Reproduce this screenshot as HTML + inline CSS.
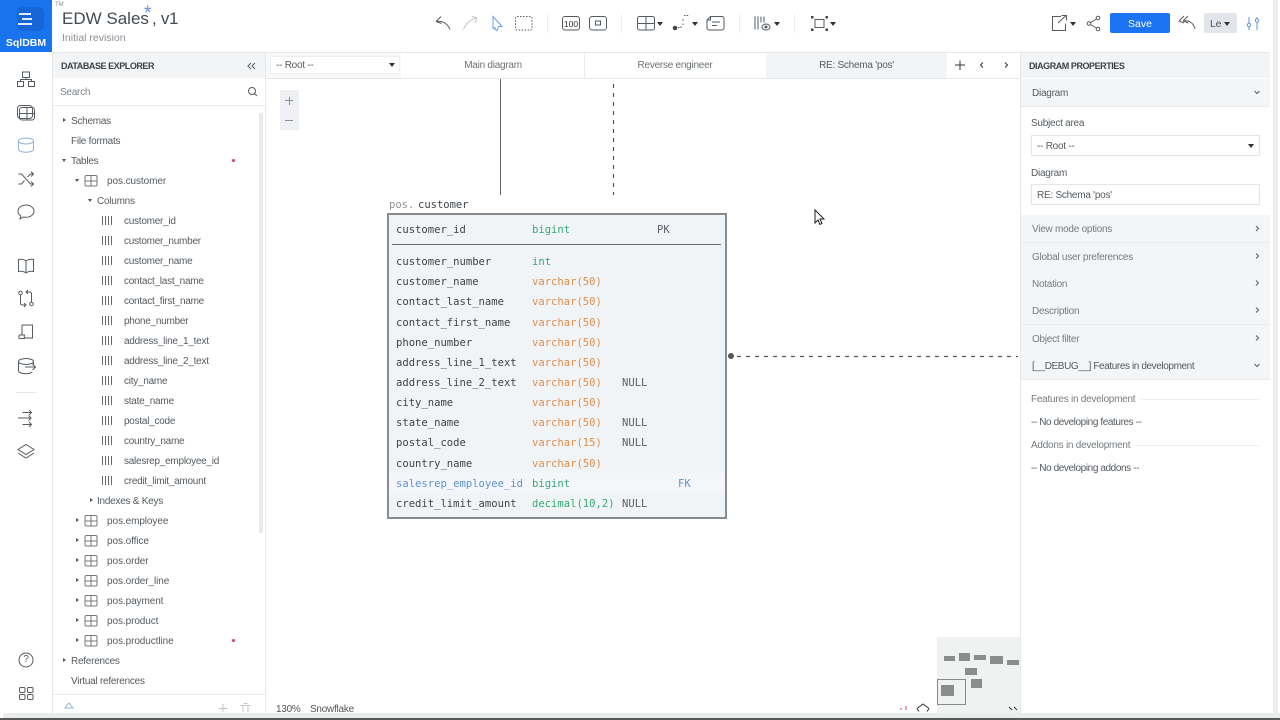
<!DOCTYPE html>
<html><head><meta charset="utf-8"><title>SqlDBM</title>
<style>
html,body{margin:0;padding:0;width:1280px;height:720px;overflow:hidden;background:#fff}
#r{position:relative;width:1280px;height:720px;overflow:hidden;font-family:"Liberation Sans",sans-serif;color:#555b60;font-size:10px;filter:blur(.3px)}
.t{position:absolute;line-height:16px;white-space:nowrap;letter-spacing:-.25px;transform:translateY(2px)}
.p{letter-spacing:-.08px}
.b{position:absolute}
.m{position:absolute;line-height:16px;white-space:nowrap;font-family:"DejaVu Sans Mono",monospace;font-size:10.55px;color:#3f4448;transform:translateY(1px)}
.g{color:#3aa873}.o{color:#dc8f4e}.n{color:#5b6166}
svg{position:absolute;overflow:visible;fill:none;stroke:#555b60;stroke-width:1}
.a{position:absolute;width:0;height:0;border-top:2.5px solid transparent;border-bottom:2.5px solid transparent;border-left:3px solid #555}
.d{position:absolute;width:0;height:0;border-left:2.5px solid transparent;border-right:2.5px solid transparent;border-top:3px solid #555}
.c{position:absolute;width:0;height:0;border-left:3px solid transparent;border-right:3px solid transparent;border-top:4px solid #333}
.sep{position:absolute;width:1px;height:19px;top:14px;background:#eceeef}
.row{position:absolute;left:1021px;width:249px;height:27px;background:#f3f5f7;border-bottom:1px solid #e9ebed}
.dot{position:absolute;width:3px;height:3px;border-radius:2px;background:#e2386a;left:232px}
.h{font-size:9px;color:#3d4246;font-weight:bold;letter-spacing:-.45px}
</style></head><body><div id="r">

<!-- left rail -->
<div class="b" style="left:0;top:0;width:52px;height:52px;background:#1873ee"></div>
<div class="b" style="left:17px;top:7px;width:27px;height:24px;background:#1666d8;border-radius:6px"></div>
<div class="b" style="left:19px;top:13px;width:12px;height:2px;background:#dfeafd"></div>
<div class="b" style="left:22px;top:18px;width:10px;height:2px;background:#dfeafd"></div>
<div class="b" style="left:18px;top:23px;width:14px;height:2px;background:#dfeafd"></div>
<div class="t" style="left:0;top:33px;width:52px;text-align:center;color:#fff;font-size:10.5px;font-weight:bold;letter-spacing:0">SqlDBM</div>
<div class="b" style="left:52px;top:52px;width:1px;height:668px;background:#e6e8ea"></div>
<div class="t" style="left:55px;top:-5px;font-size:6px;color:#888;letter-spacing:0">TM</div>

<svg style="left:0;top:0" width="53" height="720">
 <!-- hierarchy -->
 <rect x="22.5" y="72" width="7" height="5.5"/><rect x="17.5" y="81.5" width="6" height="5"/><rect x="28.5" y="81.5" width="6" height="5"/><path d="M26 77.5v2M20.5 81.5v-2h11v2"/>
 <!-- table -->
 <rect x="17.5" y="105.500" width="15" height="13" rx="3"/>
 <rect x="19.5" y="107.500" width="15" height="12.500" rx="2.500"/><path d="M19.500 113.500h15M27 107.500v12.500"/>
 <!-- database -->
 <g stroke="#8fb1dd"><ellipse cx="26" cy="141" rx="7.5" ry="3"/><path d="M18.5 141v8c0 2 3.4 3.2 7.500 3.200s7.500-1.200 7.500-3.200v-8"/></g>
 <!-- shuffle -->
 <path d="M18.500 174l3 0 9 10h3M18.500 184h3l3-3.500M27.500 177l3-3h3M31 171.500l2.500 2.500-2.500 2.500M31 181.500l2.500 2.500-2.500 2.500"/>
 <!-- comment -->
 <path d="M26 205c-4.500 0-8 2.800-8 6.300 0 2 1.100 3.600 2.800 4.700l-.8 2.800 3.400-1.800c.8.200 1.700.3 2.600.3 4.500 0 8-2.800 8-6 0-3.500-3.500-6.300-8-6.300z"/>
 <!-- book -->
 <path d="M26 261c-2-1.500-5-2-7.500-1.500v12c2.500-.5 5.500 0 7.500 1.500 2-1.500 5-2 7.500-1.500v-12c-2.500-.5-5.500 0-7.500 1.500zM26 261v12"/>
 <!-- pull request -->
 <circle cx="20.500" cy="293" r="1.800"/><circle cx="31.500" cy="304" r="1.800"/><path d="M20.500 295v8c0 1.500 1 2 2 2h3M24 303l2 2-2 2M31.500 302v-8c0-1.500-1-2-2-2h-3M28 290l-2 2 2 2"/>
 <!-- scroll -->
 <path d="M22 325h10.500v13h-8M22 325v10M22 335h-2.500c-.8 0-.8 3.500 0 3.500h5.500c-1-.5-1-3.500 0-3.500z"/>
 <!-- db arrow -->
 <ellipse cx="26" cy="361.500" rx="7.500" ry="3"/><path d="M18.500 361.500v9c0 2 3.400 3.200 7.500 3.200 2.500 0 5-.5 6.300-1.700M33.500 361.500v3M25 367h10.500M32.500 364l3 3-3 3"/>
 <!-- arrows -->
 <path d="M22.500 412.500h9M29 410l2.500 2.500-2.500 2.500M18 418h13M28.500 415.500l2.500 2.500-2.500 2.500M22.500 424.500h9M29 422l2.500 2.500-2.500 2.500"/>
 <!-- layers -->
 <path d="M26 444.500l8 5-8 5-8-5zM18 453l8 5 8-5"/>
 <!-- help -->
 <circle cx="26" cy="660" r="7"/>
 <!-- apps -->
 <rect x="19.500" y="687.500" width="5.500" height="5" rx="1.200"/><rect x="27.500" y="687.500" width="5.500" height="5" rx="1.200"/><rect x="19.500" y="694.500" width="5.500" height="5" rx="1.200"/><rect x="27.500" y="694.500" width="5.500" height="5" rx="1.200"/>
</svg>
<div class="b" style="left:16px;top:392px;width:20px;height:1px;background:#e6e8ea"></div>
<div class="t" style="left:22px;top:650px;font-size:10px;color:#555;width:8px;text-align:center;letter-spacing:0">?</div>

<!-- title -->
<div class="t" style="left:62px;top:6px;font-size:17px;line-height:22px;color:#444a4f;letter-spacing:0">EDW Sales</div>
<div class="t" style="left:144px;top:2px;font-size:19px;line-height:20px;color:#6c8fdc;letter-spacing:0">*</div>
<div class="t" style="left:152px;top:6px;font-size:17px;line-height:22px;color:#444a4f;letter-spacing:-.3px">, v1</div>
<div class="t" style="left:62px;top:28px;font-size:10.5px;color:#8b9095;letter-spacing:0">Initial revision</div>

<!-- toolbar icons -->
<svg style="left:0;top:0" width="1280" height="52">
 <path d="M436 21.500l5-5M436 21.500l5.500 2M436.500 21.500c5-1 11 1.500 13.500 8"/>
 <g stroke="#c2c5c8"><path d="M477 18l-5-1.500M477 18l-2 5M476.500 18c-5 1-10 4-13 11.500"/></g>
 <path d="M493 16.500l9 10h-3.500l-1.500 4-2 -1 0-2-2 1z" stroke="#6f9ce0"/>
 <rect x="515.500" y="16.500" width="16.500" height="13.500" rx="1.500" stroke-dasharray="1.500 1.500"/>
 <rect x="562.500" y="16.500" width="17" height="13.500" rx="2.500"/>
 <rect x="589.500" y="16.500" width="17" height="13.500" rx="2.500"/><rect x="595.500" y="21" width="5" height="4" />
 <rect x="637.500" y="16.500" width="17" height="13.500" rx="2"/><path d="M637.500 23.500h17M646 16.500v13.500"/>
 <circle cx="675" cy="28" r="1.800" fill="#444" stroke="#444"/><path d="M678 27.500h3v-2M683 25v-2M683 21v-3M684 15.500h5" stroke-dasharray="1.500 1.200"/>
 <path d="M710.500 16.500h11.500a2 2 0 012 2v9.500a2 2 0 01-2 2h-13a2 2 0 01-2-2v-8zM706.500 20h4v-3.500M712 22h8M712 25.500h5"/>
 <path d="M755 16.500v13M758 16.500v13M761 16.500v6M764 16.500v6"/><ellipse cx="766" cy="27" rx="4" ry="3"/><circle cx="766" cy="27" r="1" fill="#555"/>
 <rect x="815" y="19.500" width="9" height="8"/>
 <g fill="#444" stroke="none"><rect x="811" y="16" width="2.500" height="2.500"/><rect x="825.500" y="16" width="2.500" height="2.500"/><rect x="811" y="28.500" width="2.500" height="2.500"/><rect x="825.500" y="28.500" width="2.500" height="2.500"/></g>
 <!-- right -->
 <path d="M1061 16.500h-8.500v14h13v-7M1058 23l8-7.500M1061.500 15.500h5v5"/>
 <circle cx="1098" cy="18" r="1.800"/><circle cx="1098" cy="29" r="1.800"/><circle cx="1089" cy="23.500" r="1.800"/><path d="M1090.500 22.500l6-3.500M1090.500 24.500l6 3.500"/>
 <path d="M1183 21l5-5M1183 21l5.500 2M1179 21l5-5M1179 21l5 2M1184 21c5-1 9.500 2 11 8"/>
 <g stroke="#5d93dc"><path d="M1249 17v13M1257 17v13"/><circle cx="1249" cy="25" r="1.700" fill="#fff"/><circle cx="1257" cy="20.500" r="1.700" fill="#fff"/></g>
</svg>
<div class="t" style="left:562px;top:13.500px;width:18px;text-align:center;font-size:8.5px;color:#333;letter-spacing:0">100</div>
<div class="sep" style="left:547px"></div><div class="sep" style="left:621px"></div><div class="sep" style="left:739px"></div><div class="sep" style="left:794px"></div>
<div class="c" style="left:657px;top:21.500px"></div><div class="c" style="left:692px;top:21.500px"></div><div class="c" style="left:774px;top:21.500px"></div><div class="c" style="left:830px;top:21.500px"></div><div class="c" style="left:1070px;top:21.500px"></div>
<div class="b" style="left:1110px;top:13px;width:60px;height:20px;background:#1c74f2;border-radius:2px"></div>
<div class="t" style="left:1110px;top:14px;width:60px;text-align:center;color:#fff;font-size:10.500px;letter-spacing:0">Save</div>
<div class="b" style="left:1204px;top:13px;width:33px;height:20px;background:#e2e5e9;border-radius:2px"></div>
<div class="t" style="left:1210px;top:14px;color:#555;font-size:10.5px">Le</div>
<div class="c" style="left:1224px;top:21.500px"></div>

<!-- horizontal lines under header -->
<div class="b" style="left:53px;top:52px;width:1217px;height:1px;background:#e6e8ea"></div>
<div class="b" style="left:265px;top:78px;width:755px;height:1px;background:#e6e8ea"></div>

<!-- explorer -->
<div class="b" style="left:53px;top:53px;width:212px;height:25px;background:#f2f4f6"></div>
<div class="t h" style="left:61px;top:56px">DATABASE EXPLORER</div>
<svg style="left:0;top:0" width="280" height="110"><path d="M251 63l-3 3 3 3M255 63l-3 3 3 3"/><circle cx="252" cy="91" r="3.500"/><path d="M254.500 93.500l2.500 2.500"/></svg>
<div class="t" style="left:60px;top:83px;color:#7d8286">Search</div>
<div class="b" style="left:53px;top:105px;width:212px;height:1px;background:#e9ebed"></div>
<div class="b" style="left:265px;top:52px;width:1px;height:668px;background:#e6e8ea"></div>
<div class="b" style="left:259px;top:113px;width:4px;height:420px;background:#e9eaeb"></div>

<div class="a" style="left:63px;top:118px"></div><div class="t" style="left:71px;top:112px">Schemas</div>
<div class="t" style="left:71px;top:132px">File formats</div>
<div class="d" style="left:62px;top:159px"></div><div class="t" style="left:71px;top:152px">Tables</div><div class="dot" style="top:159px"></div>
<div class="d" style="left:75px;top:179px"></div><div class="t p" style="left:107px;top:172px">pos.customer</div>
<div class="d" style="left:88px;top:199px"></div><div class="t" style="left:97px;top:192px">Columns</div>
<div class="t" style="left:124px;top:212px">customer_id</div>
<div class="t" style="left:124px;top:232px">customer_number</div>
<div class="t" style="left:124px;top:252px">customer_name</div>
<div class="t" style="left:124px;top:272px">contact_last_name</div>
<div class="t" style="left:124px;top:292px">contact_first_name</div>
<div class="t" style="left:124px;top:312px">phone_number</div>
<div class="t" style="left:124px;top:332px">address_line_1_text</div>
<div class="t" style="left:124px;top:352px">address_line_2_text</div>
<div class="t" style="left:124px;top:372px">city_name</div>
<div class="t" style="left:124px;top:392px">state_name</div>
<div class="t" style="left:124px;top:412px">postal_code</div>
<div class="t" style="left:124px;top:432px">country_name</div>
<div class="t" style="left:124px;top:452px">salesrep_employee_id</div>
<div class="t" style="left:124px;top:472px">credit_limit_amount</div>
<div class="a" style="left:90px;top:498px"></div><div class="t" style="left:97px;top:492px">Indexes &amp; Keys</div>
<div class="a" style="left:76px;top:518px"></div><div class="t p" style="left:107px;top:512px">pos.employee</div>
<div class="a" style="left:76px;top:538px"></div><div class="t p" style="left:107px;top:532px">pos.office</div>
<div class="a" style="left:76px;top:558px"></div><div class="t p" style="left:107px;top:552px">pos.order</div>
<div class="a" style="left:76px;top:578px"></div><div class="t p" style="left:107px;top:572px">pos.order_line</div>
<div class="a" style="left:76px;top:598px"></div><div class="t p" style="left:107px;top:592px">pos.payment</div>
<div class="a" style="left:76px;top:618px"></div><div class="t p" style="left:107px;top:612px">pos.product</div>
<div class="a" style="left:76px;top:638px"></div><div class="t p" style="left:107px;top:632px">pos.productline</div><div class="dot" style="top:639px"></div>
<div class="a" style="left:63px;top:658px"></div><div class="t" style="left:71px;top:652px">References</div>
<div class="t" style="left:71px;top:672px">Virtual references</div>
<div class="b" style="left:53px;top:694px;width:212px;height:1px;background:#e9ebed"></div>

<svg style="left:0;top:0" width="270" height="720" stroke="#777">
 <g stroke="#777">
 <rect x="85" y="175.500" width="12" height="10.500" rx="1.500"/><path d="M85 181h12M91 175.500v10.500"/>
 <rect x="85" y="515.500" width="12" height="10.500" rx="1.500"/><path d="M85 521h12M91 515.500v10.500"/>
 <rect x="85" y="535.500" width="12" height="10.500" rx="1.500"/><path d="M85 541h12M91 535.500v10.500"/>
 <rect x="85" y="555.500" width="12" height="10.500" rx="1.500"/><path d="M85 561h12M91 555.500v10.500"/>
 <rect x="85" y="575.500" width="12" height="10.500" rx="1.500"/><path d="M85 581h12M91 575.500v10.500"/>
 <rect x="85" y="595.500" width="12" height="10.500" rx="1.500"/><path d="M85 601h12M91 595.500v10.500"/>
 <rect x="85" y="615.500" width="12" height="10.500" rx="1.500"/><path d="M85 621h12M91 615.500v10.500"/>
 <rect x="85" y="635.500" width="12" height="10.500" rx="1.500"/><path d="M85 641h12M91 635.500v10.500"/>
 </g>
 <g stroke="#666">
 <path d="M102.500 216v9M105.500 216v9M108.500 216v9M111.500 216v9"/>
 <path d="M102.500 236v9M105.500 236v9M108.500 236v9M111.500 236v9"/>
 <path d="M102.500 256v9M105.500 256v9M108.500 256v9M111.500 256v9"/>
 <path d="M102.500 276v9M105.500 276v9M108.500 276v9M111.500 276v9"/>
 <path d="M102.500 296v9M105.500 296v9M108.500 296v9M111.500 296v9"/>
 <path d="M102.500 316v9M105.500 316v9M108.500 316v9M111.500 316v9"/>
 <path d="M102.500 336v9M105.500 336v9M108.500 336v9M111.500 336v9"/>
 <path d="M102.500 356v9M105.500 356v9M108.500 356v9M111.500 356v9"/>
 <path d="M102.500 376v9M105.500 376v9M108.500 376v9M111.500 376v9"/>
 <path d="M102.500 396v9M105.500 396v9M108.500 396v9M111.500 396v9"/>
 <path d="M102.500 416v9M105.500 416v9M108.500 416v9M111.500 416v9"/>
 <path d="M102.500 436v9M105.500 436v9M108.500 436v9M111.500 436v9"/>
 <path d="M102.500 456v9M105.500 456v9M108.500 456v9M111.500 456v9"/>
 <path d="M102.500 476v9M105.500 476v9M108.500 476v9M111.500 476v9"/>
 </g>
 <g stroke="#8fb1dd"><path d="M65 708l4-5 4 5zM69 703v1"/></g>
 <g stroke="#c3c6c9"><path d="M223 704v9M218.500 708.500h9M240.500 705.500h10M243 705.500v8M248 705.500v8M243.500 703.500h4"/></g>
</svg>

<!-- tab bar -->
<div class="b" style="left:266px;top:53px;width:135px;height:25px;background:#f7f8f9"></div>
<div class="b" style="left:270px;top:56px;width:130px;height:18px;background:#fff;border:1px solid #edeff0;box-sizing:border-box"></div>
<div class="t" style="left:276px;top:56px">-- Root --</div>
<div class="c" style="left:389px;top:62.500px"></div>
<div class="t" style="left:401px;top:56px;width:184px;text-align:center;color:#6d7276">Main diagram</div>
<div class="b" style="left:584px;top:53px;width:1px;height:25px;background:#e9ebed"></div>
<div class="t" style="left:585px;top:56px;width:180px;text-align:center;color:#6d7276">Reverse engineer</div>
<div class="b" style="left:766px;top:53px;width:181px;height:25px;background:#f2f4f6"></div>
<div class="t" style="left:766px;top:56px;width:181px;text-align:center;color:#555b60">RE: Schema 'pos'</div>
<svg style="left:0;top:0" width="1280" height="110">
 <path d="M955 65h10M960 60.500v9.500" stroke="#333"/><path d="M983 62.500l-2.500 2.500 2.500 2.500M1005 62.500l2.500 2.500-2.500 2.500" stroke="#333"/>
 <path d="M1255 63l3 3-3 3M1259 63l3 3-3 3"/>
</svg>
<!-- zoom -->
<div class="b" style="left:280px;top:90px;width:19px;height:40px;background:#eef0f3"></div>
<div class="b" style="left:285px;top:100px;width:8px;height:1px;background:#8a8f93"></div>
<div class="b" style="left:288.500px;top:96.500px;width:1px;height:8px;background:#8a8f93"></div>
<div class="b" style="left:285px;top:120px;width:8px;height:1px;background:#8a8f93"></div>

<!-- canvas -->
<div class="b" style="left:499.500px;top:79px;width:1.500px;height:116px;background:#666"></div>
<svg style="left:0;top:0" width="1280" height="400">
 <path d="M613.500 84v111" stroke="#555" stroke-width="1.200" stroke-dasharray="4 5"/>
 <path d="M737 356.500h281" stroke="#555" stroke-width="1.200" stroke-dasharray="4 5"/>
</svg>
<div class="m" style="left:389px;top:196px;color:#8e9398;font-size:10.500px">pos.</div>
<div class="m" style="left:418px;top:196px;font-size:10.500px">customer</div>
<div class="b" style="left:387px;top:213px;width:340px;height:306px;box-sizing:border-box;background:#f1f4f7;border:2px solid #898c8f"></div>
<div class="b" style="left:392px;top:244px;width:329px;height:1px;background:#64686b"></div>
<div class="b" style="left:389px;top:473px;width:336px;height:20px;background:#f4f6f9"></div>

<div class="m" style="left:396px;top:221px">customer_id</div><div class="m g" style="left:532px;top:221px">bigint</div><div class="m n" style="left:657px;top:221px">PK</div>
<div class="m" style="left:396px;top:253px">customer_number</div><div class="m g" style="left:532px;top:253px">int</div>
<div class="m" style="left:396px;top:273px">customer_name</div><div class="m o" style="left:532px;top:273px">varchar(50)</div>
<div class="m" style="left:396px;top:293px">contact_last_name</div><div class="m o" style="left:532px;top:293px">varchar(50)</div>
<div class="m" style="left:396px;top:314px">contact_first_name</div><div class="m o" style="left:532px;top:314px">varchar(50)</div>
<div class="m" style="left:396px;top:334px">phone_number</div><div class="m o" style="left:532px;top:334px">varchar(50)</div>
<div class="m" style="left:396px;top:354px">address_line_1_text</div><div class="m o" style="left:532px;top:354px">varchar(50)</div>
<div class="m" style="left:396px;top:374px">address_line_2_text</div><div class="m o" style="left:532px;top:374px">varchar(50)</div><div class="m n" style="left:622px;top:374px">NULL</div>
<div class="m" style="left:396px;top:394px">city_name</div><div class="m o" style="left:532px;top:394px">varchar(50)</div>
<div class="m" style="left:396px;top:414px">state_name</div><div class="m o" style="left:532px;top:414px">varchar(50)</div><div class="m n" style="left:622px;top:414px">NULL</div>
<div class="m" style="left:396px;top:434px">postal_code</div><div class="m o" style="left:532px;top:434px">varchar(15)</div><div class="m n" style="left:622px;top:434px">NULL</div>
<div class="m" style="left:396px;top:455px">country_name</div><div class="m o" style="left:532px;top:455px">varchar(50)</div>
<div class="m" style="left:396px;top:475px;color:#5b94d2">salesrep_employee_id</div><div class="m g" style="left:532px;top:475px">bigint</div><div class="m" style="left:678px;top:475px;color:#5b94d2">FK</div>
<div class="m" style="left:396px;top:495px">credit_limit_amount</div><div class="m g" style="left:532px;top:495px">decimal(10,2)</div><div class="m n" style="left:622px;top:495px">NULL</div>

<div class="b" style="left:728px;top:353px;width:6px;height:6px;border-radius:3px;background:#555"></div>

<svg style="left:0;top:0" width="1280" height="240"><path d="M815 210v13l3-3 2 4.500 2-1-2-4.500h4z" fill="#fff" stroke="#222"/></svg>

<!-- minimap -->
<div class="b" style="left:937px;top:637px;width:83px;height:76px;background:#eff2f1"></div>
<div class="b" style="left:944px;top:656px;width:11px;height:5px;background:#8b8d8d"></div>
<div class="b" style="left:959px;top:653px;width:11px;height:8px;background:#8b8d8d"></div>
<div class="b" style="left:974px;top:655px;width:12px;height:5px;background:#8b8d8d"></div>
<div class="b" style="left:990px;top:656px;width:13px;height:8px;background:#8b8d8d"></div>
<div class="b" style="left:1007px;top:660px;width:12px;height:5px;background:#8b8d8d"></div>
<div class="b" style="left:965px;top:668px;width:12px;height:7px;background:#8b8d8d"></div>
<div class="b" style="left:971px;top:679px;width:11px;height:9px;background:#8b8d8d"></div>
<div class="b" style="left:941px;top:685px;width:13px;height:11px;background:#8b8d8d"></div>
<div class="b" style="left:937px;top:679px;width:29px;height:26px;box-sizing:border-box;border:1.500px solid #888"></div>
<svg style="left:0;top:0" width="1280" height="720">
 <path d="M917 708.500l6-4.500 6 4.500M917 708.500l2 3M929 708.500l-2 3" stroke="#333"/>
 <path d="M1009 707l3 3M1014 707l3 3" stroke="#333"/>
 <path d="M900 709h2M906 706v4" stroke="#e2386a"/>
</svg>
<div class="t" style="left:276px;top:700px;color:#555">130%</div>
<div class="t" style="left:310px;top:700px;color:#555">Snowflake</div>
<div class="b" style="left:53px;top:711.500px;width:884px;height:2px;background:#fff"></div>

<!-- right panel -->
<div class="b" style="left:1020px;top:52px;width:1px;height:668px;background:#e6e8ea"></div>
<div class="b" style="left:1021px;top:53px;width:249px;height:25px;background:#f2f4f6"></div>
<div class="t h" style="left:1029px;top:56px">DIAGRAM PROPERTIES</div>
<div class="row" style="top:79px"></div>
<div class="t" style="left:1032px;top:84px">Diagram</div>
<div class="t" style="left:1031px;top:114px">Subject area</div>
<div class="b" style="left:1031px;top:135px;width:229px;height:21px;box-sizing:border-box;border:1px solid #e3e5e7;background:#fff"></div>
<div class="t" style="left:1037px;top:137px">-- Root --</div>
<div class="c" style="left:1248px;top:144px"></div>
<div class="t" style="left:1031px;top:164px">Diagram</div>
<div class="b" style="left:1031px;top:184px;width:229px;height:21px;box-sizing:border-box;border:1px solid #e3e5e7;background:#fff"></div>
<div class="t" style="left:1037px;top:186px">RE: Schema 'pos'</div>
<div class="row" style="top:215px"></div><div class="t" style="left:1032px;top:220px;color:#777c80">View mode options</div>
<div class="row" style="top:243px"></div><div class="t" style="left:1032px;top:248px;color:#777c80">Global user preferences</div>
<div class="row" style="top:270px"></div><div class="t" style="left:1032px;top:275px;color:#777c80">Notation</div>
<div class="row" style="top:297px"></div><div class="t" style="left:1032px;top:302px;color:#777c80">Description</div>
<div class="row" style="top:325px"></div><div class="t" style="left:1032px;top:330px;color:#777c80">Object filter</div>
<div class="row" style="top:352px"></div><div class="t" style="left:1032px;top:357px;letter-spacing:-.4px">[__DEBUG__] Features in development</div>
<div class="t" style="left:1031px;top:390px;color:#777c80">Features in development</div>
<div class="b" style="left:1141px;top:399px;width:119px;height:1px;background:#eceef0"></div>
<div class="t" style="left:1031px;top:413px;letter-spacing:-.4px">-- No developing features --</div>
<div class="t" style="left:1031px;top:436px;color:#777c80">Addons in development</div>
<div class="b" style="left:1136px;top:445px;width:124px;height:1px;background:#eceef0"></div>
<div class="t" style="left:1031px;top:459px;letter-spacing:-.4px">-- No developing addons --</div>
<svg style="left:0;top:0" width="1280" height="400" stroke="#555">
 <path d="M1254.500 91l2.500 2.500 2.500-2.500M1254.500 364l2.500 2.500 2.500-2.500"/>
 <path d="M1256 226l2.500 2.500-2.500 2.500M1256 253.500l2.500 2.500-2.500 2.500M1256 280.500l2.500 2.500-2.500 2.500M1256 307.500l2.500 2.500-2.500 2.500M1256 335.500l2.500 2.500-2.500 2.500"/>
</svg>

<!-- window scrollbars -->
<div class="b" style="left:1273px;top:0;width:5px;height:713px;background:#eceeee"></div>
<div class="b" style="left:3px;top:713px;width:1277px;height:5px;background:#e9ecea"></div>
<div class="b" style="left:0;top:713px;width:3px;height:5px;background:#fff"></div>
<div class="b" style="left:0;top:718px;width:1280px;height:2px;background:#56585a"></div>
</div></body></html>
